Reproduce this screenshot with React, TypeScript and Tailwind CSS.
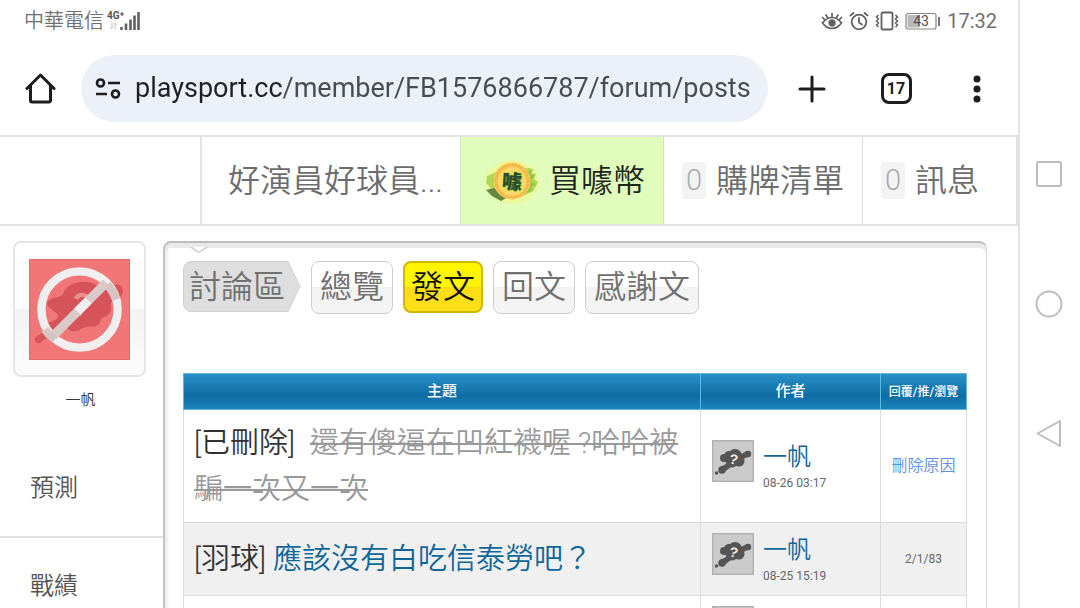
import type { ReactNode } from "react";

type Post = {
  id: number;
  tag?: string;
  title?: string;
  deleted?: boolean;
  author?: string;
  date?: string;
  stats?: string;
};

const posts: Post[] = [
  { id: 1, tag: "[已刪除]", title: "還有傻逼在凹紅襪喔 ?哈哈被騙一次又一次", deleted: true, author: "一帆", date: "08-26 03:17", stats: "刪除原因" },
  { id: 2, tag: "[羽球]", title: "應該沒有白吃信泰勞吧？", author: "一帆", date: "08-25 15:19", stats: "2/1/83" },
  { id: 3 },
];

const tabs = ["總覽", "發文", "回文", "感謝文"];

function Avatar() {
  return (
    <svg viewBox="0 0 42 42" className="size-[42px] shrink-0" aria-hidden="true">
      <rect width="42" height="42" fill="#b2b2b2" />
      <rect x="1.5" y="1.5" width="39" height="39" fill="#cbcbcb" />
      <g fill="#555">
        <circle cx="12" cy="18" r="4" />
        <circle cx="17" cy="16" r="5" />
        <circle cx="23" cy="16" r="7" />
        <circle cx="20" cy="21" r="6.5" />
        <circle cx="27" cy="21" r="5.5" />
        <circle cx="36" cy="14" r="3.2" />
        <path d="m27 15 8-4 3 5-9 4z" />
        <circle cx="10" cy="30" r="3.8" />
        <path d="m8 27 8-4 3 4-8 6z" />
        <circle cx="4.500" cy="33" r="1.800" />
      </g>
      <text x="21.500" y="24" textAnchor="middle" fontSize="14" fontWeight="bold" fill="#eee" transform="rotate(12 21 20)" fontFamily="Liberation Sans, sans-serif">?</text>
    </svg>
  );
}

function BannedAvatar() {
  return (
    <svg viewBox="0 0 102 102" className="w-full" aria-hidden="true">
      <rect width="102" height="102" fill="#e4696d" />
      <rect x="1" y="1" width="100" height="100" fill="#f07678" />
      <path
        d="M19 43c3-5 10-3 15-7 3-9 12-14 23-13 9 0 12 6 20 7 5 0 8-5 14-4 5 2 5 9 1 12-3 3-7 3-9 6-1 4 1 8-2 11-3 4-8 3-9 8-2 5-7 6-12 5-6 1-9 5-15 5-6-1-7-5-11-6-4 1-4 8-8 12-5 4-10 0-12 3-2 4-7 4-8 0s5-5 8-8c3-5 3-10 9-11 4-1 7-3 6-7-2-4-13-6-10-13z"
        fill="#d55359"
      />
      <text x="53" y="58" textAnchor="middle" fontSize="34" fontWeight="bold" fill="#eb8f90" transform="rotate(12 53 46)" fontFamily="Liberation Sans, sans-serif">?</text>
      <circle cx="51" cy="51" r="38.5" fill="none" stroke="#f0eeee" strokeWidth="8.5" />
      <path d="M24 78 78 24" stroke="#d9c9c9" strokeWidth="9" />
      <path d="M49 53 60 42" stroke="#f4efef" strokeWidth="9" />
      <path d="M79 26a38.5 38.5 0 0 1 9 15" fill="none" stroke="#d8c3c3" strokeWidth="8.5" />
      <path d="M16 71a38.5 38.5 0 0 0 10 10" fill="none" stroke="#d8c3c3" strokeWidth="8.5" />
    </svg>
  );
}

function Coin() {
  return (
    <svg viewBox="0 0 60 48" className="h-12 w-[60px]" aria-hidden="true">
      <ellipse cx="31" cy="25" rx="27" ry="22" fill="#eff691" opacity=".7" />
      <path d="m6 19 12-5 30-3 4 1-2 4 5 1-2 5 4 3-2 4-3 5-12 6-16-1-13-5-3-5-3-3 1-4z" fill="#b0d754" />
      <path d="m44 15 8-2-3 5 5 0-4 6 5 3-5 3 1 4-8 3z" fill="#94c748" />
      <path d="m5 33 8-2 14 9-7 4-9-5z" fill="#64883f" />
      <circle cx="31" cy="24" r="18.500" fill="#fcd05c" />
      <circle cx="31" cy="24" r="16" fill="none" stroke="#f5b145" strokeWidth="3.500" strokeDasharray="2 1" />
      <circle cx="31" cy="25" r="14" fill="#ffd968" />
      <text x="31" y="32" textAnchor="middle" fontSize="20" fontWeight="900" fill="#2a4a30" stroke="#b5dc4c" strokeWidth="1.500" paintOrder="stroke" transform="rotate(4 31 25)" fontFamily="Noto Sans CJK TC, sans-serif">噱</text>
    </svg>
  );
}

function StatusBar() {
  return (
    <div className="flex h-[42px] items-center justify-between pr-[21px] pl-6 text-[#707070]">
      <div className="flex items-center gap-0.5">
        <span className="text-xl leading-5 font-[350]">中華電信</span>
        <svg viewBox="0 0 36 22" className="h-[22px] w-9" aria-hidden="true">
          <text x="1" y="9" fontSize="10" fontWeight="bold" fill="#555" fontFamily="Roboto, sans-serif">4G</text>
          <path d="M14 4h4M16 2v4" stroke="#555" strokeWidth="1.2" />
          <path d="M6 13v6l-2-2M9 19v-6l2 2" stroke="#c4c4c4" fill="none" />
          <path d="M15.500 17v3M20 13.500v6.500M24.500 9.500v10.500M28.500 5.500v14.500M32.500 2v18" stroke="#606060" strokeWidth="2.600" />
        </svg>
      </div>
      <div className="flex items-center gap-1.5">
        <svg viewBox="0 0 22 20" className="h-5 w-[22px]" fill="none" stroke="#606060" strokeWidth="1.700" strokeLinecap="round" aria-hidden="true">
          <path d="M1.500 12C4.500 8 8 6.500 11 6.500s6.500 1.500 9.500 5.500c-3 4-6.500 5.500-9.500 5.500S4.500 16 1.500 12zM11 2.500v3M5 4l1.500 2.500M17 4l-1.500 2.500M1.500 6.500 3.500 8.500M20.500 6.500l-2 2" />
          <circle cx="11" cy="12" r="2.800" fill="#606060" />
        </svg>
        <svg viewBox="0 0 20 20" className="size-5" fill="none" stroke="#606060" strokeWidth="1.800" strokeLinecap="round" aria-hidden="true">
          <circle cx="10" cy="11" r="7.300" />
          <path d="M10 7v4.500l3 2M1.500 4.500l3-2.500M18.500 4.500l-3-2.500" />
        </svg>
        <svg viewBox="0 0 24 20" className="h-5 w-6" fill="none" stroke="#606060" aria-hidden="true">
          <rect x="6.500" y="1.500" width="11" height="17" rx="1.500" strokeWidth="1.800" />
          <path d="m3.500 4-2 2 2 2-2 2 2 2-2 2 2 2M20.500 4l2 2-2 2 2 2-2 2 2 2-2 2" strokeWidth="1.500" />
        </svg>
        <svg viewBox="0 0 36 18" className="h-[18px] w-9" aria-hidden="true">
          <rect x="1" y="1.500" width="30" height="15.500" rx="2" fill="#fff" stroke="#858585" strokeWidth="1.200" />
          <path d="M2.500 3h12.500v12.500h-12.500z" fill="#b9b9b9" />
          <path d="M34 5v9" stroke="#666" strokeWidth="1.800" />
          <text x="16" y="14" textAnchor="middle" fontSize="14" fill="#505050" fontFamily="Roboto, sans-serif">43</text>
        </svg>
        <span className="text-xl leading-5">17:32</span>
      </div>
    </div>
  );
}

function Toolbar() {
  return (
    <div className="flex h-[93px] items-center pr-0.5 pl-6">
      <button type="button" aria-label="首頁" className="mr-[25px]">
        <svg viewBox="0 0 32 32" className="size-8" fill="none" stroke="#1d1d1f" strokeWidth="3" strokeLinejoin="round" strokeLinecap="round" aria-hidden="true">
          <path d="M3 15.500 16.500 2 30 15.500M6.500 13v14.500a1.500 1.500 0 0 0 1.500 1.500h17a1.500 1.500 0 0 0 1.500-1.500V13" />
        </svg>
      </button>
      <label className="flex h-[67px] min-w-0 flex-1 items-center gap-3 rounded-full bg-[#ecf0f9] pr-2 pl-3.5">
        <svg viewBox="0 0 28 24" className="h-6 w-7 shrink-0" fill="none" stroke="#1d1d1f" strokeWidth="2.600" aria-label="網站資訊">
          <circle cx="5.500" cy="6" r="3.500" />
          <path d="M13 6h12M1 17h11" />
          <circle cx="20.500" cy="17" r="3.500" />
        </svg>
        <input
          type="text"
          aria-label="網址"
          defaultValue="playsport.cc/member/FB1576866787/forum/posts"
          className="min-w-0 flex-1 bg-[linear-gradient(90deg,#1f2023_148px,#484b50_148px)] bg-clip-text text-[27px] text-transparent outline-none"
        />
      </label>
      <button type="button" aria-label="新分頁" className="ml-0.5 flex w-[84px] justify-center">
        <svg viewBox="0 0 28 28" className="size-7" stroke="#1d1d1f" strokeWidth="3" strokeLinecap="round" aria-hidden="true">
          <path d="M14 2v24M2 14h24" />
        </svg>
      </button>
      <button type="button" aria-label="分頁" className="flex w-[84px] justify-center">
        <span className="flex size-[31px] items-center justify-center rounded-lg border-3 border-[#1d1d1f] text-base leading-none font-bold text-[#1d1d1f]">17</span>
      </button>
      <button type="button" aria-label="更多" className="flex w-[78px] justify-center">
        <svg viewBox="0 0 8 28" className="h-7 w-2" fill="#1d1d1f" aria-hidden="true">
          <circle cx="4" cy="4" r="3.500" />
          <circle cx="4" cy="14" r="3.500" />
          <circle cx="4" cy="24" r="3.500" />
        </svg>
      </button>
    </div>
  );
}

function Count({ children }: { children: ReactNode }) {
  return <span className="flex h-[37px] w-6 items-center justify-center rounded-sm bg-[#f3f3f3] text-[29px] text-[#ababab]">{children}</span>;
}

function SiteNav() {
  return (
    <nav className="flex h-[91px] justify-end border-y-2 border-r-2 border-[#e3e3e3] text-[32px] font-[350] text-[#6d6d6d]">
      <a href="#user" className="flex w-[260px] items-center border-l-2 border-[#e3e3e3] pl-[26px] whitespace-nowrap">好演員好球員...</a>
      <a href="#coin" className="flex w-[203px] items-center gap-2 border-l border-[#d5dfcb] bg-[#e0fdbb] pl-5 text-[#20251b]">
        <Coin />
        買噱幣
      </a>
      <a href="#cart" className="flex w-[199px] items-center gap-2.5 border-l border-[#dadada] pl-[18px]">
        <Count>0</Count>
        購牌清單
      </a>
      <a href="#messages" className="flex w-[154px] items-center gap-2.5 border-l border-[#dadada] pl-[18px]">
        <Count>0</Count>
        訊息
      </a>
    </nav>
  );
}

function Sidebar() {
  return (
    <aside className="flex w-[163px] shrink-0 flex-col">
      <div className="mr-[17px] ml-[13px] rounded-lg border-2 border-[#e5e5e5] bg-[linear-gradient(#fff_50%,#f3f3f3_50%,#fcfcfc)] px-3.5 pt-4 pb-[15px]">
        <BannedAvatar />
      </div>
      <p className="mt-[13px] mb-[30px] pr-0.5 text-center text-[15px] leading-5 font-[350] text-[#333]">一帆</p>
      <a href="#forecast" className="flex h-[98px] shrink-0 items-center border-b-2 border-[#e1e1e1] pl-[30px] text-2xl font-[350] text-[#555]">預測</a>
      <a href="#record" className="flex h-[98px] shrink-0 items-center border-b-2 border-[#e1e1e1] pl-[30px] text-2xl font-[350] text-[#555]">戰績</a>
    </aside>
  );
}

function Tabs() {
  return (
    <div className="flex items-start gap-2.5 text-[32px] leading-[48px] font-[350] text-[#707070]">
      <div className="relative flex h-[51px] w-[118px] items-center pl-1.5">
        <svg viewBox="0 0 118 51" className="absolute inset-0 size-full" aria-hidden="true">
          <path d="M8 .5h97l12 25-12 25H8a7.500 7.500 0 0 1-7.500-7.500V8A7.500 7.500 0 0 1 8 .5z" fill="#dedede" stroke="#cfcfcf" />
        </svg>
        <span className="relative">討論區</span>
      </div>
      {tabs.map((tab) => (
        <a
          key={tab}
          href={`#${tab}`}
          className={
            tab === "發文"
              ? "rounded-lg border-2 border-[#cfb800] bg-[linear-gradient(#fff500_50%,#fbdd13_50%,#ffe01a)] px-1.5 text-[#111]"
              : "rounded-lg border border-[#cdcdcd] bg-[linear-gradient(#fff_50%,#f2f2f2_50%,#f5f5f5)] px-2 pt-px pb-0.5"
          }
        >
          {tab}
        </a>
      ))}
    </div>
  );
}

function PostTable() {
  return (
    <table className="mt-[59px] w-full table-fixed border-collapse">
      <thead>
        <tr className="h-9 bg-[linear-gradient(#2b90c8,#0e6da4_60%,#1f84bd)] text-[15px] text-white">
          <th className="border border-[#62b7e0] font-medium">主題</th>
          <th className="w-[180px] border border-[#62b7e0] font-medium">作者</th>
          <th className="w-[86px] border border-[#62b7e0] text-xs font-medium whitespace-nowrap">回覆/推/瀏覽</th>
        </tr>
      </thead>
      <tbody>
        {posts.map((post) => (
          <tr key={post.id} className="bg-white even:bg-[#f0f0f0]">
            <td className="border border-[#dcdcdc] px-2.5 py-2.5 text-[29px] leading-[46px] font-[350] text-[#333]">
              {post.tag}{" "}
              {post.title && (
                <a href={`#post-${post.id}`} className={post.deleted ? "ml-2 text-[#999] line-through" : "text-[#0e6698]"}>
                  {post.title}
                </a>
              )}
            </td>
            <td className="border border-[#dcdcdc] px-[11px] py-2.5">
              <div className="flex items-start gap-[9px]">
                <Avatar />
                {post.author && (
                  <div>
                    <a href="#author" className="block text-2xl leading-[34px] font-[350] text-[#0e6698]">{post.author}</a>
                    <span className="block text-xs leading-[18px] text-[#666]">{post.date}</span>
                  </div>
                )}
              </div>
            </td>
            <td className="border border-[#dcdcdc] text-center text-xs text-[#666]">
              {post.deleted ? <a href="#reason" className="text-base font-[350] text-[#5f8ede]">{post.stats}</a> : post.stats}
            </td>
          </tr>
        ))}
      </tbody>
    </table>
  );
}

function SystemKeys() {
  return (
    <div className="flex w-[60px] shrink-0 flex-col items-center justify-center gap-[102px] pr-0.5">
      <button type="button" aria-label="多工">
        <svg viewBox="0 0 28 28" className="size-7" fill="none" stroke="#bdbdbd" strokeWidth="2" aria-hidden="true">
          <rect x="2" y="2" width="24" height="24" rx="1.500" />
        </svg>
      </button>
      <button type="button" aria-label="主畫面">
        <svg viewBox="0 0 28 28" className="size-7" fill="none" stroke="#bdbdbd" strokeWidth="2" aria-hidden="true">
          <circle cx="14" cy="14" r="12.500" />
        </svg>
      </button>
      <button type="button" aria-label="返回">
        <svg viewBox="0 0 28 28" className="size-7" fill="none" stroke="#bdbdbd" strokeWidth="2" strokeLinejoin="round" aria-hidden="true">
          <path d="M2.500 13.500 25 1v25z" />
        </svg>
      </button>
    </div>
  );
}

export default function App() {
  return (
    <div className="flex h-screen overflow-hidden bg-white font-[Roboto,'Noto_Sans_CJK_TC',sans-serif]">
      <main className="flex min-w-0 flex-1 flex-col border-r-2 border-[#e4e4e4]">
        <StatusBar />
        <Toolbar />
        <SiteNav />
        <div className="flex min-h-0 flex-1 pt-[15px] pr-[31px]">
          <Sidebar />
          <section className="relative min-w-0 flex-1 self-start rounded-t-lg border-t-2 border-r border-l-2 border-t-[#bdbdbd] border-r-[#d8d8d8] border-l-[#c4c4c4] pt-[18px] pr-[19px] pl-[18px] shadow-[inset_0_5px_0_#e9e9e9,inset_3px_0_3px_#eee]">
            <svg viewBox="0 0 20 8" className="absolute top-1 left-6 h-2 w-5" aria-hidden="true">
              <path d="M1 0c5 1 6 5 9 5s4-4 9-5" fill="#fff" stroke="#d2d2d2" strokeWidth="1.500" />
            </svg>
            <Tabs />
            <PostTable />
          </section>
        </div>
      </main>
      <SystemKeys />
    </div>
  );
}
